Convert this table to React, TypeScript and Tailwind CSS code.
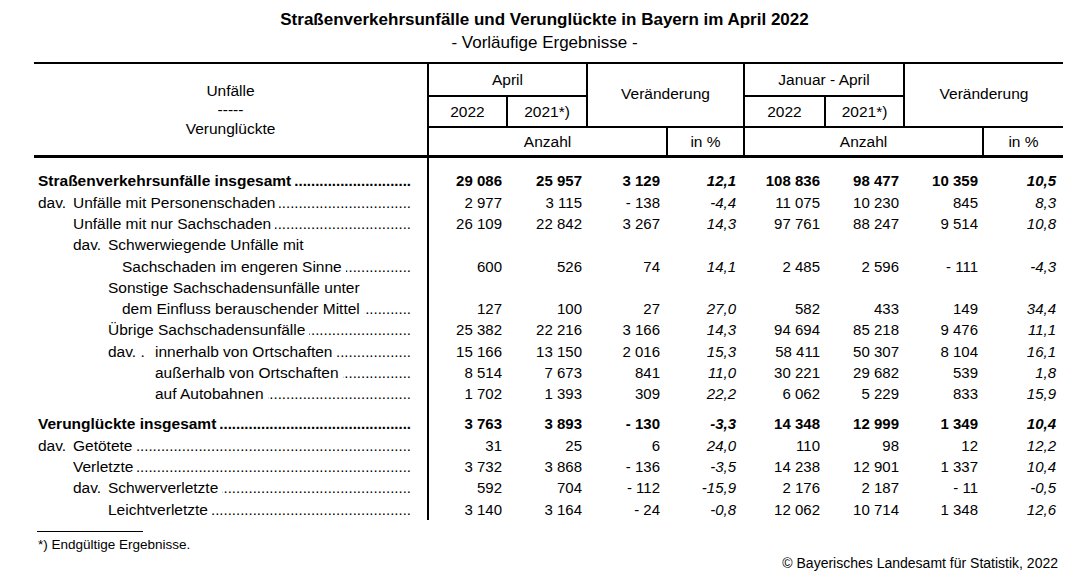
import React from 'react';

type Row = {
  label: string;
  indent: number;
  prefix?: string;
  prefixW?: number;
  bold?: boolean;
  dots?: boolean;
  v?: string[];
};

const indentCls: Record<number, string> = {
  0: 'pl-0',
  35: 'pl-[35px]',
  70: 'pl-[70px]',
  84: 'pl-[84px]',
  117: 'pl-[117px]',
};

const rowsA: Row[] = [
  { label: 'Straßenverkehrsunfälle insgesamt', indent: 0, bold: true, dots: true, v: ['29 086', '25 957', '3 129', '12,1', '108 836', '98 477', '10 359', '10,5'] },
  { label: 'Unfälle mit Personenschaden', indent: 0, prefix: 'dav.', prefixW: 35, dots: true, v: ['2 977', '3 115', '- 138', '-4,4', '11 075', '10 230', '845', '8,3'] },
  { label: 'Unfälle mit nur Sachschaden', indent: 35, dots: true, v: ['26 109', '22 842', '3 267', '14,3', '97 761', '88 247', '9 514', '10,8'] },
  { label: 'Schwerwiegende Unfälle mit', indent: 35, prefix: 'dav.', prefixW: 35 },
  { label: 'Sachschaden im engeren Sinne', indent: 84, dots: true, v: ['600', '526', '74', '14,1', '2 485', '2 596', '- 111', '-4,3'] },
  { label: 'Sonstige Sachschadensunfälle unter', indent: 70 },
  { label: 'dem Einfluss berauschender Mittel', indent: 84, dots: true, v: ['127', '100', '27', '27,0', '582', '433', '149', '34,4'] },
  { label: 'Übrige Sachschadensunfälle', indent: 70, dots: true, v: ['25 382', '22 216', '3 166', '14,3', '94 694', '85 218', '9 476', '11,1'] },
  { label: 'innerhalb von Ortschaften', indent: 70, prefix: 'dav. .', prefixW: 47, dots: true, v: ['15 166', '13 150', '2 016', '15,3', '58 411', '50 307', '8 104', '16,1'] },
  { label: 'außerhalb von Ortschaften', indent: 117, dots: true, v: ['8 514', '7 673', '841', '11,0', '30 221', '29 682', '539', '1,8'] },
  { label: 'auf Autobahnen', indent: 117, dots: true, v: ['1 702', '1 393', '309', '22,2', '6 062', '5 229', '833', '15,9'] },
];

const rowsB: Row[] = [
  { label: 'Verunglückte insgesamt', indent: 0, bold: true, dots: true, v: ['3 763', '3 893', '- 130', '-3,3', '14 348', '12 999', '1 349', '10,4'] },
  { label: 'Getötete', indent: 0, prefix: 'dav.', prefixW: 35, dots: true, v: ['31', '25', '6', '24,0', '110', '98', '12', '12,2'] },
  { label: 'Verletzte', indent: 35, dots: true, v: ['3 732', '3 868', '- 136', '-3,5', '14 238', '12 901', '1 337', '10,4'] },
  { label: 'Schwerverletzte', indent: 35, prefix: 'dav.', prefixW: 35, dots: true, v: ['592', '704', '- 112', '-15,9', '2 176', '2 187', '- 11', '-0,5'] },
  { label: 'Leichtverletzte', indent: 70, dots: true, v: ['3 140', '3 164', '- 24', '-0,8', '12 062', '10 714', '1 348', '12,6'] },
];

const GRID = 'grid grid-cols-[393px_79px_80px_80px_77px_81px_79px_79px_81px]';

const padCls = ['pr-[4px]', 'pr-[4px]', 'pr-[6px]', 'pr-[7px]', 'pr-[4px]', 'pr-[4px]', 'pr-[4px]', 'pr-[7px]'];

function DataRow({ r }: { r: Row }) {
  return (
    <div className={`${GRID} h-[21.3px] leading-[21.3px]`}>
      <div className={`pl-[4px] pr-[16px] whitespace-nowrap text-[15.5px] ${r.bold ? 'font-bold' : ''}`}>
        <div className={`flex ${indentCls[r.indent]}`}>
          {r.prefix && (
            <span className={`shrink-0 ${r.prefixW === 47 ? 'w-[47px]' : 'w-[35px]'}`}>{r.prefix}</span>
          )}
          <span className="shrink-0">{r.label}</span>
          {r.dots && (
            <span className="flex-1 min-w-0 overflow-hidden flex justify-end ml-[4px] text-[15px]">
              <span className="shrink-0">{'.'.repeat(100)}</span>
            </span>
          )}
        </div>
      </div>
      {Array.from({ length: 8 }).map((_, i) => (
        <div
          key={i}
          className={`text-right whitespace-nowrap ${padCls[i]} ${i === 0 ? 'border-l-2 border-black' : ''} ${r.bold ? 'font-bold' : ''} ${i === 3 || i === 7 ? 'italic' : ''}`}
        >
          {r.v ? r.v[i] : ''}
        </div>
      ))}
    </div>
  );
}

function Spacer({ h }: { h: string }) {
  return (
    <div className={`${GRID} ${h}`}>
      <div />
      <div className="border-l-2 border-black" />
    </div>
  );
}

export default function App() {
  return (
    <div className="w-[1089px] h-[585px] bg-white text-black font-['Liberation_Sans',Arial,sans-serif] overflow-hidden">
      <div className="pt-[10px] text-center">
        <div className="text-[17px] font-bold leading-[20px]">
          Straßenverkehrsunfälle und Verunglückte in Bayern im April 2022
        </div>
        <div className="text-[17px] leading-[20px] mt-[3px]">- Vorläufige Ergebnisse -</div>
      </div>

      <div className="ml-[34px] w-[1029px] mt-[9px] text-[15px]">
        {/* Header */}
        <div className={`${GRID} grid-rows-[33px_31px_27px] border-t-2 border-b-[3px] border-black leading-[19px] text-[15.5px]`}>
          <div className="row-start-1 row-span-3 col-start-1 flex flex-col items-center justify-center">
            <span>Unfälle</span>
            <span>-----</span>
            <span>Verunglückte</span>
          </div>
          <div className="row-start-1 col-start-2 col-span-2 border-l-2 border-b-2 border-black flex items-center justify-center">
            April
          </div>
          <div className="row-start-1 row-span-2 col-start-4 col-span-2 border-l-2 border-b-2 border-black flex items-center justify-center pb-[3px]">
            Veränderung
          </div>
          <div className="row-start-1 col-start-6 col-span-2 border-l-2 border-b-2 border-black flex items-center justify-center">
            Januar - April
          </div>
          <div className="row-start-1 row-span-2 col-start-8 col-span-2 border-l-2 border-b-2 border-black flex items-center justify-center pb-[3px]">
            Veränderung
          </div>
          <div className="row-start-2 col-start-2 border-l-2 border-b-2 border-black flex items-center justify-center">2022</div>
          <div className="row-start-2 col-start-3 border-l-2 border-b-2 border-black flex items-center justify-center">2021*)</div>
          <div className="row-start-2 col-start-6 border-l-2 border-b-2 border-black flex items-center justify-center">2022</div>
          <div className="row-start-2 col-start-7 border-l-2 border-b-2 border-black flex items-center justify-center">2021*)</div>
          <div className="row-start-3 col-start-2 col-span-3 border-l-2 border-black flex items-center justify-center">Anzahl</div>
          <div className="row-start-3 col-start-5 border-l-2 border-black flex items-center justify-center">in %</div>
          <div className="row-start-3 col-start-6 col-span-3 border-l-2 border-black flex items-center justify-center">Anzahl</div>
          <div className="row-start-3 col-start-9 border-l-2 border-black flex items-center justify-center">in %</div>
        </div>

        {/* Body */}
        <Spacer h="h-[12.4px]" />
        {rowsA.map((r, i) => (
          <DataRow key={`a${i}`} r={r} />
        ))}
        <Spacer h="h-[8.7px]" />
        {rowsB.map((r, i) => (
          <DataRow key={`b${i}`} r={r} />
        ))}
      </div>

      <div className="ml-[37px] mt-[11px] w-[106px] border-t border-black" />
      <div className="ml-[38px] text-[13.5px] leading-[16px] mt-[5px]">*) Endgültige Ergebnisse.</div>
      <div className="text-right pr-[31px] text-[14px] leading-[18px] mt-[1px]">
        © Bayerisches Landesamt für Statistik, 2022
      </div>
    </div>
  );
}
